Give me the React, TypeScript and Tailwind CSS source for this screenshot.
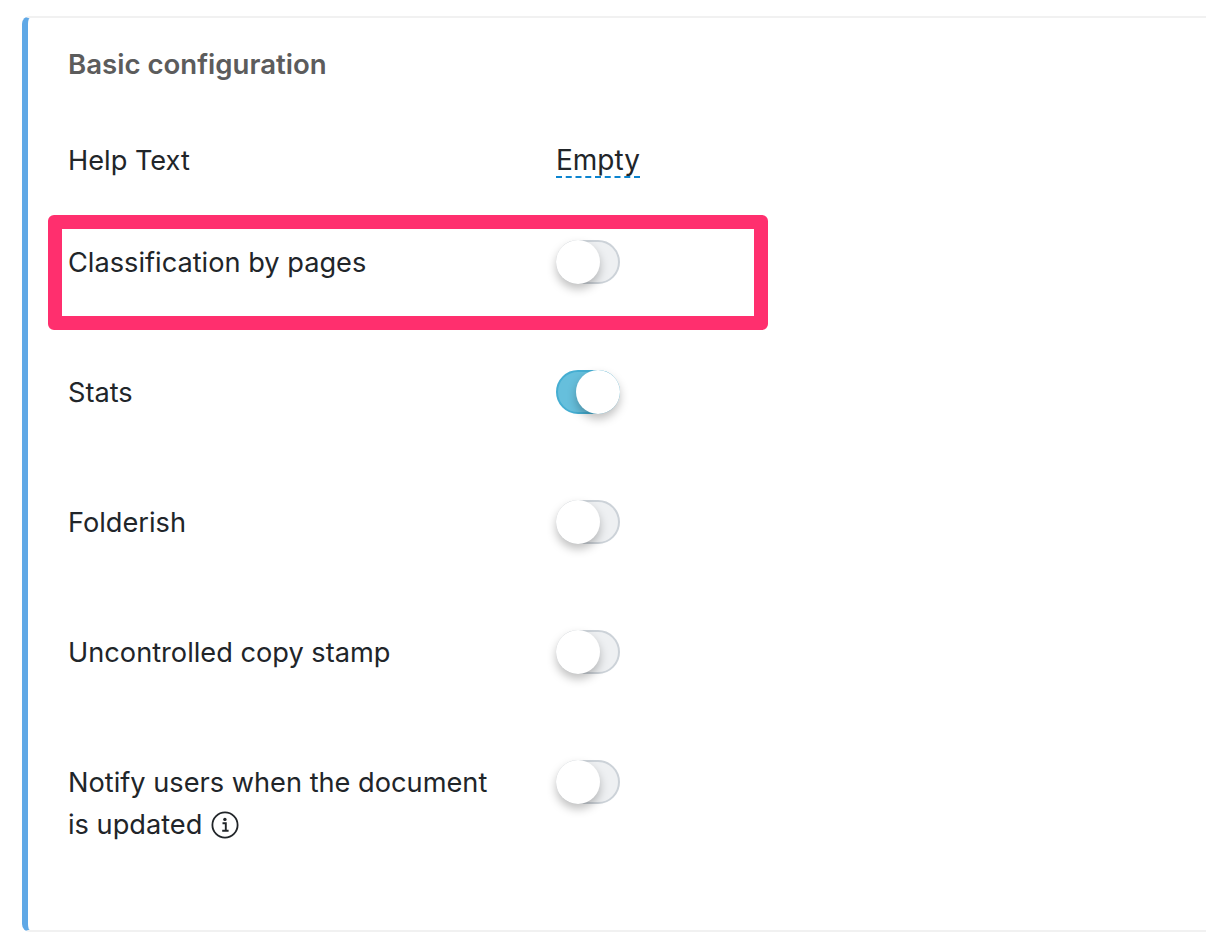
const rows = [
  { label: "Classification by pages", on: false, highlight: true },
  { label: "Stats", on: true },
  { label: "Folderish", on: false },
  { label: "Uncontrolled copy stamp", on: false },
];

function Toggle({ on }: { on: boolean }) {
  return (
    <div
      className={`relative h-[44px] w-[64px] rounded-full border-2 ${
        on ? "border-[#45aed2] bg-[#66bfdc]" : "border-[#ccd2d8] bg-[#eef0f2]"
      }`}
    >
      <div
        className={`absolute top-[-2px] h-[44px] w-[44px] rounded-full bg-white shadow-[0_5px_10px_rgba(0,0,0,0.25)] ${
          on ? "right-[-2px]" : "left-[-2px]"
        }`}
      />
    </div>
  );
}

function InfoIcon() {
  return (
    <svg className="ml-[9px] inline-block align-[-5px]" width="28" height="28" viewBox="0 0 28 28" fill="none">
      <circle cx="14" cy="14" r="12.6" stroke="#212529" strokeWidth="1.8" />
      <path d="M11.5 12.2h3.3v7.4M11.2 19.7h6.4" stroke="#212529" strokeWidth="1.9" />
      <circle cx="13.9" cy="8.4" r="1.7" fill="#212529" />
    </svg>
  );
}

export default function App() {
  return (
    <div
      className="h-[948px] w-[1206px] overflow-hidden bg-white pl-[22px] pt-[16px] text-[27.2px] text-[#212529]"
      style={{ fontFamily: "Inter, sans-serif" }}
    >
      <div className="h-[916px] w-[1300px] rounded-l-[8px] border-y-2 border-l-[6px] border-y-[#f1f1f1] border-l-[#5fa8e6] pl-[40px] pt-[28px]">
        <h2 className="text-[27.6px] font-semibold leading-[36px] text-[#5c5c5c]">Basic configuration</h2>

        <div className="mt-[60px] flex h-[36px] items-center">
          <div className="w-[488px] pt-[2px]">Help Text</div>
          <span className="mt-[2px] border-b-2 border-dashed border-[#0b84cf] text-[28px] leading-[32px]">Empty</span>
        </div>

        <div className="mt-[62px] flex flex-col gap-[86px]">
          {rows.map((row) => (
            <div key={row.label} className="relative flex h-[44px] items-center">
              {row.highlight && (
                <div className="absolute left-[-20px] top-[-25px] h-[115px] w-[720px] rounded-[6px] border-[14px] border-[#ff2f6e]" />
              )}
              <div className="w-[488px] pt-[2px]">{row.label}</div>
              <Toggle on={row.on} />
            </div>
          ))}

          <div className="flex items-start">
            <div className="w-[488px] pt-[2px] leading-[42px]">
              Notify users when the document
              <br />
              is updated
              <InfoIcon />
            </div>
            <Toggle on={false} />
          </div>
        </div>
      </div>
    </div>
  );
}
